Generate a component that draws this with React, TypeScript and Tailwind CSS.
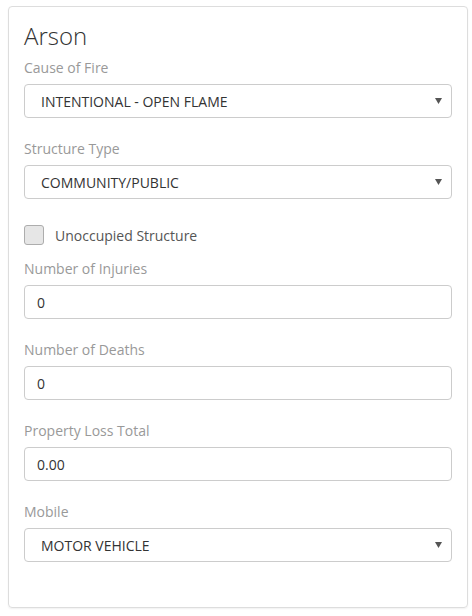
import React from "react";

function Label({ children }: { children: React.ReactNode }) {
  return (
    <div className="text-[14px] leading-[20px] text-[#999] mb-[6px]">
      {children}
    </div>
  );
}

function SelectBox({ value }: { value: string }) {
  return (
    <div className="relative h-[34px] border border-[#ccc] rounded-[4px] bg-white flex items-center pl-[16px] pr-[30px] text-[14px] text-[#333]">
      <span>{value}</span>
      <span className="absolute right-[9px] top-1/2 -translate-y-1/2">
        <svg width="7" height="6" viewBox="0 0 7 6">
          <path d="M0 0 H7 L3.5 6 Z" fill="#555" />
        </svg>
      </span>
    </div>
  );
}

function TextBox({ value }: { value: string }) {
  return (
    <div className="h-[34px] border border-[#ccc] rounded-[4px] bg-white flex items-center px-[12px] text-[14px] text-[#333]">
      {value}
    </div>
  );
}

function Field({
  label,
  children,
}: {
  label: string;
  children: React.ReactNode;
}) {
  return (
    <div className="mb-[21px]">
      <Label>{label}</Label>
      {children}
    </div>
  );
}

export default function App() {
  return (
    <div
      className="w-[472px] h-[616px] bg-white pt-[6px] pl-[8px]"
      style={{ fontFamily: '"Open Sans", sans-serif' }}
    >
      <div className="w-[460px] h-[602px] border border-[#ddd] rounded-[4px] shadow-[0_1px_2px_rgba(0,0,0,0.06)] px-[15px] pt-[14px]">
        <h2 className="text-[24px] leading-[30px] font-light text-[#333] mb-[7px]">
          Arson
        </h2>
        <Field label="Cause of Fire">
          <SelectBox value="INTENTIONAL - OPEN FLAME" />
        </Field>
        <Field label="Structure Type">
          <SelectBox value="COMMUNITY/PUBLIC" />
        </Field>
        <div className="flex items-center h-[32px] -mt-[1px] mb-[8px]">
          <div className="w-[20px] h-[20px] rounded-[3px] border border-[#adadad] bg-[#e6e6e6]" />
          <span className="ml-[11px] text-[14px] text-[#555]">
            Unoccupied Structure
          </span>
        </div>
        <Field label="Number of Injuries">
          <TextBox value="0" />
        </Field>
        <Field label="Number of Deaths">
          <TextBox value="0" />
        </Field>
        <Field label="Property Loss Total">
          <TextBox value="0.00" />
        </Field>
        <Field label="Mobile">
          <SelectBox value="MOTOR VEHICLE" />
        </Field>
      </div>
    </div>
  );
}
